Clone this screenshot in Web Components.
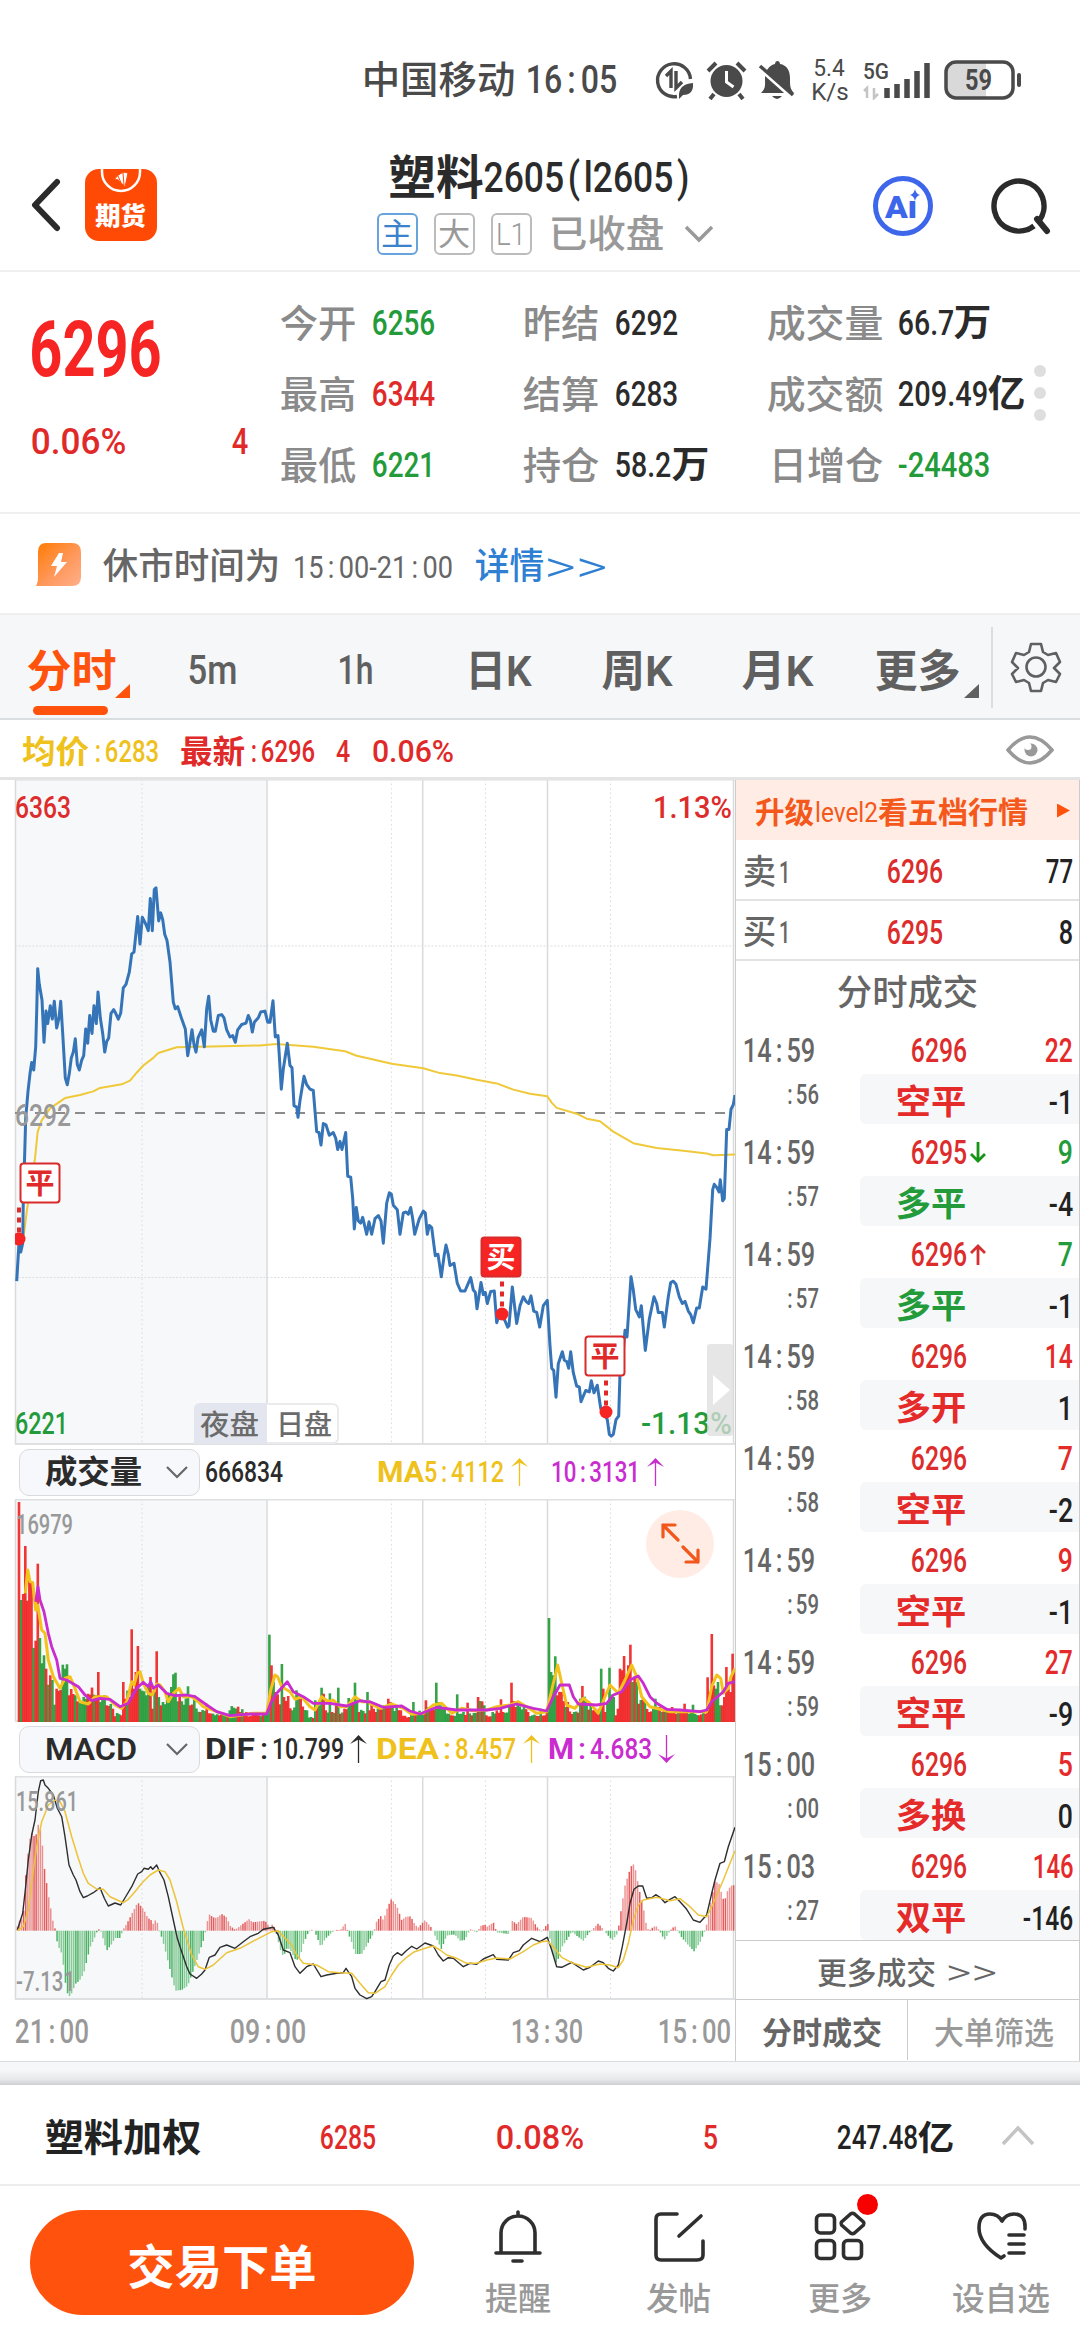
<!DOCTYPE html>
<html lang="zh-CN">
<head>
<meta charset="utf-8">
<title>塑料2605</title>
<style>
    html, body { margin: 0; padding: 0; background: #fff; }
    body {
        width: 1080px;
        height: 2340px;
        overflow: hidden;
        font-family: Roboto, "Noto Sans CJK SC", sans-serif;
        color: #2b2b2b;
        --red: #e02a2a;
        --green: #239b3a;
        --gray: #666;
        --soft: #999;
        --orange: #ff520d;
        --gold: #efc11c;
        --purple: #c92ccf;
        --pale: #f6f7f9;
    }
    .main { display: flex; height: 1281px; }
    .left { width: 735px; flex: none; }
</style>
</head>
<body>
<status-bar></status-bar>
<title-bar></title-bar>
<quote-panel></quote-panel>
<notice-row></notice-row>
<period-tabs></period-tabs>
<legend-row></legend-row>
<div class="main">
    <div class="left">
        <price-chart></price-chart>
        <indicator-bar name="成交量" name-width="95">
            <fit-text w="76" size="30" ml="0">666834</fit-text>
            <fit-text w="45" size="30" ml="96" weight="700" color="var(--gold)">MA</fit-text>
            <fit-text w="78" size="30" ml="2" color="var(--gold)">5:4112</fit-text>
            <trend-arrow ml="8" color="var(--gold)"></trend-arrow>
            <fit-text w="87" size="30" ml="24" color="var(--purple)">10:3131</fit-text>
            <trend-arrow ml="8" color="var(--purple)"></trend-arrow>
        </indicator-bar>
        <volume-chart></volume-chart>
        <indicator-bar name="MACD" name-width="90">
            <fit-text w="48" size="30" ml="0" weight="700">DIF</fit-text>
            <fit-text w="6" size="30" ml="7" tight>:</fit-text>
            <fit-text w="70" size="30" ml="6">10.799</fit-text>
            <trend-arrow ml="7"></trend-arrow>
            <fit-text w="61" size="30" ml="10" weight="700" color="var(--gold)">DEA</fit-text>
            <fit-text w="6" size="30" ml="6" color="var(--gold)" tight>:</fit-text>
            <fit-text w="59" size="30" ml="6" color="var(--gold)">8.457</fit-text>
            <trend-arrow ml="8" color="var(--gold)"></trend-arrow>
            <fit-text w="24" size="30" ml="9" weight="700" color="var(--purple)">M</fit-text>
            <fit-text w="6" size="30" ml="6" color="var(--purple)" tight>:</fit-text>
            <fit-text w="60" size="30" ml="6" color="var(--purple)">4.683</fit-text>
            <trend-arrow ml="7" color="var(--purple)" down></trend-arrow>
        </indicator-bar>
        <macd-chart></macd-chart>
        <time-axis></time-axis>
    </div>
    <trade-panel></trade-panel>
</div>
<index-bar></index-bar>
<action-bar></action-bar>

<script>
// One run of text squeezed or stretched to an exact width.
class FitText extends HTMLElement {
    connectedCallback() {
        if (this.shadowRoot) return;
        const size = Number(this.getAttribute('size'));
        const width = Number(this.getAttribute('w'));
        this.attachShadow({ mode: 'open' });
        this.shadowRoot.innerHTML = `
            <style>
                :host {
                    display: block;
                    flex: none;
                    width: ${width}px;
                    margin-left: ${this.getAttribute('ml') || 0}px;
                    line-height: ${size}px;
                    font-size: ${size}px;
                    font-weight: ${this.getAttribute('weight') || 500};
                    color: ${this.getAttribute('color') || 'inherit'};
                }
                span { display: inline-block; white-space: nowrap; transform-origin: 0 50%; }
                ::slotted(i) { font-style: normal; padding: 0 .16em; }
            </style>
            <span><slot></slot></span>
        `;
        if (this.textContent.includes(':') && !this.hasAttribute('tight')) {
            this.innerHTML = this.textContent.replace(/:/g, '<i>:</i>');
        }
        const span = this.shadowRoot.querySelector('span');
        const bearing = size * 0.035;
        const scale = (width + bearing * 2) / span.getBoundingClientRect().width;
        span.style.transform = `translateX(${-bearing}px) scaleX(${scale})`;
    }
}
customElements.define('fit-text', FitText);

class TrendArrow extends HTMLElement {
    connectedCallback() {
        this.attachShadow({ mode: 'open' });
        this.shadowRoot.innerHTML = `
            <style>
                :host { display: block; flex: none; width: 17px; height: 28px; margin-left: ${this.getAttribute('ml')}px; color: ${this.getAttribute('color') || '#2b2b2b'}; }
                svg { display: block; ${this.hasAttribute('down') ? 'transform: rotate(180deg);' : ''} }
            </style>
            <svg width="17" height="28"><path d="M8.5 28V2" stroke="currentColor" stroke-width="1.3"/><path d="M8.5 0L17 9L8.5 4.5L0 9Z" fill="currentColor"/></svg>
        `;
    }
}
customElements.define('trend-arrow', TrendArrow);

class StatusBar extends HTMLElement {
    connectedCallback() {
        this.attachShadow({ mode: 'open' });
        this.shadowRoot.innerHTML = `
            <style>
                :host { display: flex; align-items: center; height: 108px; padding: 26px 0 0 363px; color: #4a4a4a; }
                svg { display: block; flex: none; }
                .stack { margin-left: 17px; display: flex; flex-direction: column; gap: 1px; }
            </style>
            <fit-text w="151" size="38">中国移动</fit-text>
            <fit-text w="89" size="39" ml="13">16:05</fit-text>
            <svg style="margin-left:38px" width="141" height="40" viewBox="653 59 141 40">
                <g fill="none" stroke="currentColor" stroke-width="3.4">
                    <path d="M676 95.500A16.500 16.500 0 1 1 689.500 78"/>
                    <path d="M665 75l5-5v17M675 70v17l6-6"/>
                </g>
                <path d="M678 96q-1-13 14-14q1 12-10 12l-4 4z" fill="currentColor"/>
                <circle cx="725.500" cy="80" r="16" fill="currentColor"/>
                <path d="M707 70l8-8M744 70l-8-8M713 93l-4 5M738 93l4 5" stroke="currentColor" stroke-width="4"/>
                <path d="M725.500 70v11l7 5" fill="none" stroke="#fff" stroke-width="3"/>
                <path d="M760 92c5-5 4-8 4-15c0-8 5-13 10-14c0-4 5-4 5 0c7 1 10 7 10 14c0 8 0 11 4 15z" fill="currentColor"/>
                <path d="M771 95h10q-5 6-10 0z" fill="currentColor"/>
                <path d="M757 66l37 33" stroke="#fff" stroke-width="4"/>
                <path d="M759 65l33 29" stroke="currentColor" stroke-width="3.500"/>
            </svg>
            <div class="stack">
                <fit-text w="30" size="23" ml="2" weight="400">5.4</fit-text>
                <fit-text w="36" size="23" weight="400">K/s</fit-text>
            </div>
            <svg style="margin-left:14px" width="70" height="40" viewBox="861 59 70 40">
                <text x="862" y="78" font-size="22" font-weight="500" textLength="26" lengthAdjust="spacingAndGlyphs" fill="currentColor">5G</text>
                <path d="M863 90l3-3v10M873 87v10l4-4" fill="none" stroke="#c4c4c4" stroke-width="2.500"/>
                <path d="M886 97V87M896 97V83M906 97V78M916 97V70M926 97V62" stroke="currentColor" stroke-width="5.500"/>
            </svg>
            <svg style="margin-left:12px" width="78" height="40" viewBox="943 59 78 40">
                <path d="M985 62H956q-10 0-10 10V87q0 10 10 10H985z" fill="#d9d9d9"/>
                <rect x="945" y="61" width="67" height="36" rx="10" fill="none" stroke="currentColor" stroke-width="3.500"/>
                <path d="M1018 74v10" stroke="currentColor" stroke-width="4" stroke-linecap="round"/>
                <text x="964" y="89" font-size="29" font-weight="700" textLength="27" lengthAdjust="spacingAndGlyphs" fill="currentColor">59</text>
            </svg>
        `;
    }
}
customElements.define('status-bar', StatusBar);

class TitleBar extends HTMLElement {
    connectedCallback() {
        this.attachShadow({ mode: 'open' });
        this.shadowRoot.innerHTML = `
            <style>
                :host { display: flex; height: 138px; padding-top: 1px; box-sizing: border-box; border-bottom: 2px solid #efefef; }
                svg { display: block; flex: none; }
                .back { margin: 43px 0 0 29px; }
                .logo { margin: 34px 0 0 23px; width: 72px; height: 72px; border-radius: 14px; background: #ff4a06; color: #fff; }
                .logo fit-text { margin-top: -1px; }
                .mid { width: 340px; margin-left: 220px; padding-top: 19px; }
                .title { display: flex; align-items: center; height: 47px; margin-left: 13px; }
                .tags { display: flex; align-items: center; height: 42px; margin-top: 12px; color: var(--soft); }
                .tag { box-sizing: border-box; width: 41px; height: 42px; padding: 4px 0 0 3px; margin-right: 16px; border: 2px solid #bcbcbc; border-radius: 6px; }
                .tag.on { border-color: #67a3dc; color: #3a82cc; }
                .ai { margin: 39px 0 0 155px; }
                .find { margin: 39px 0 0 54px; }
            </style>
            <svg class="back" width="33" height="54"><path d="M28 4L6 27L28 50" fill="none" stroke="#2b2b2b" stroke-width="6" stroke-linecap="round" stroke-linejoin="round"/></svg>
            <div class="logo">
                <svg width="72" height="36"><path d="M17 0v3a19 19 0 0 0 38 0v-3" fill="none" stroke="#fff" stroke-width="2.500"/><path d="M29 11Q36 1 43 4L40 18Q38 14 36 15Q34 9 29 11M33 7l4 9M38 4l1 12" fill="#fff" stroke="#ff4a06" stroke-width="1"/></svg>
                <fit-text w="49" size="25" ml="11" weight="900">期货</fit-text>
            </div>
            <div class="mid">
                <div class="title">
                    <fit-text w="92" size="47" weight="600">塑料</fit-text>
                    <fit-text w="203" size="43" ml="3" weight="500">2605&#8202;(&#8202;l2605&#8202;)</fit-text>
                </div>
                <div class="tags">
                    <div class="tag on"><fit-text w="30" size="31" weight="400">主</fit-text></div>
                    <div class="tag"><fit-text w="30" size="31" weight="400">大</fit-text></div>
                    <div class="tag"><fit-text w="28" size="31" ml="1" weight="300">L1</fit-text></div>
                    <fit-text w="113" size="38" ml="2">已收盘</fit-text>
                    <svg style="margin-left:20px" width="32" height="20"><path d="M3 3L16 16L29 3" fill="none" stroke="#999" stroke-width="3.500"/></svg>
                </div>
            </div>
            <svg class="ai" width="62" height="64" viewBox="872 174 62 64">
                <circle cx="903" cy="206" r="27.500" fill="none" stroke="#3d66ea" stroke-width="5"/>
                <text x="885" y="218" font-size="31" font-weight="900" textLength="32" lengthAdjust="spacingAndGlyphs" fill="#3d66ea">Ai</text>
                <circle cx="914" cy="196" r="5" fill="#fff"/>
                <path d="M915 189q1 5 5 6q-4 1-5 6q-1-5-5-6q4-1 5-6z" fill="#3d66ea"/>
            </svg>
            <svg class="find" width="64" height="64" viewBox="988 174 64 64">
                <path d="M1034 226A25 25 0 1 1 1039 221" fill="none" stroke="#2b2b2b" stroke-width="5.500"/>
                <path d="M1037 219L1047 231" stroke="#2b2b2b" stroke-width="6" stroke-linecap="round"/>
            </svg>
        `;
    }
}
customElements.define('title-bar', TitleBar);

class QuotePanel extends HTMLElement {
    connectedCallback() {
        this.attachShadow({ mode: 'open' });
        this.shadowRoot.innerHTML = `
            <style>
                :host { display: flex; height: 242px; box-sizing: border-box; border-bottom: 2px solid #efefef; }
                .last { width: 248px; padding: 40px 0 0 32px; box-sizing: border-box; color: var(--red); flex: none; }
                .change { display: flex; align-items: center; margin-top: 33px; height: 40px; }
                .col { flex: none; padding-top: 16px; margin-left: 33px; width: 210px; }
                .row { display: flex; align-items: center; height: 71.2px; color: #2b2b2b; }
                .label { color: #8a8a8a; }
                .up { color: var(--red); }
                .down { color: var(--green); }
                .dots { display: flex; flex-direction: column; gap: 10px; margin: 93px 0 0 5px; }
                .dots i { width: 12px; height: 12px; border-radius: 50%; background: #dedede; }
            </style>
            <div class="last">
                <fit-text w="127" size="77" weight="700" color="#f72424">6296</fit-text>
                <div class="change"><fit-text w="93" size="36">0.06%</fit-text><fit-text w="14" size="36" ml="108">4</fit-text></div>
            </div>
            <div class="col">
                <div class="row"><fit-text class="label" w="74" size="38">今开</fit-text><fit-text class="down" w="61" size="35" ml="18">6256</fit-text></div>
                <div class="row"><fit-text class="label" w="74" size="38">最高</fit-text><fit-text class="up" w="61" size="35" ml="18">6344</fit-text></div>
                <div class="row"><fit-text class="label" w="74" size="38">最低</fit-text><fit-text class="down" w="61" size="35" ml="18">6221</fit-text></div>
            </div>
            <div class="col">
                <div class="row"><fit-text class="label" w="74" size="38">昨结</fit-text><fit-text w="61" size="35" ml="18">6292</fit-text></div>
                <div class="row"><fit-text class="label" w="74" size="38">结算</fit-text><fit-text w="61" size="35" ml="18">6283</fit-text></div>
                <div class="row"><fit-text class="label" w="74" size="38">持仓</fit-text><fit-text w="54" size="35" ml="18">58.2</fit-text><fit-text w="35" size="37" ml="3" weight="600">万</fit-text></div>
            </div>
            <div class="col" style="width:262px">
                <div class="row"><fit-text class="label" w="114" size="38" ml="1">成交量</fit-text><fit-text w="54" size="35" ml="17">66.7</fit-text><fit-text w="35" size="37" ml="2" weight="600">万</fit-text></div>
                <div class="row"><fit-text class="label" w="114" size="38" ml="1">成交额</fit-text><fit-text w="88" size="35" ml="17">209.49</fit-text><fit-text w="35" size="37" ml="2" weight="600">亿</fit-text></div>
                <div class="row"><fit-text class="label" w="112" size="38" ml="3">日增仓</fit-text><fit-text class="down" w="90" size="35" ml="17">-24483</fit-text></div>
            </div>
            <div class="dots"><i></i><i></i><i></i></div>
        `;
    }
}
customElements.define('quote-panel', QuotePanel);

class NoticeRow extends HTMLElement {
    connectedCallback() {
        this.attachShadow({ mode: 'open' });
        this.shadowRoot.innerHTML = `
            <style>
                :host { display: flex; align-items: center; height: 101px; padding: 7px 0 0 36px; box-sizing: border-box; border-bottom: 2px solid #efefef; color: #666; }
                svg { display: block; margin-top: -6px; }
            </style>
            <svg width="46" height="43">
                <defs><linearGradient id="g" x1="0" y1="0" x2="1" y2="1"><stop offset="0" stop-color="#ff7a00"/><stop offset=".6" stop-color="#ff9a61"/><stop offset="1" stop-color="#ffb08a"/></linearGradient></defs>
                <path d="M10 0H36Q45 0 45 9V34Q45 43 36 43H0Q2 40 2 34V9Q2 0 10 0Z" fill="url(#g)"/>
                <path d="M23 10L15 23H21L18 34L31 19H25L27 10Z" fill="#fff"/>
            </svg>
            <fit-text w="175" size="36" ml="22">休市时间为</fit-text>
            <fit-text w="158" size="31" ml="15" weight="400">15:00-21:00</fit-text>
            <fit-text w="67" size="36" ml="24" color="#2f7fd3">详情</fit-text>
            <fit-text w="60" size="44" ml="3" weight="300" color="#2f7fd3">&gt;&gt;</fit-text>
        `;
    }
}
customElements.define('notice-row', NoticeRow);

class PeriodTabs extends HTMLElement {
    connectedCallback() {
        this.attachShadow({ mode: 'open' });
        this.shadowRoot.innerHTML = `
            <style>
                :host { display: flex; height: 105px; box-sizing: border-box; border-bottom: 2px solid #d9dde0; background: var(--pale); color: #606060; padding-left: 28px; }
                fit-text { margin-top: 35px; }
                .on { color: var(--orange); width: 102px; flex: none; }
                .line { width: 75px; height: 9px; margin: 8px 0 0 5px; border-radius: 5px; background: var(--orange); }
                .tri { flex: none; width: 15px; height: 14px; background: currentColor; clip-path: polygon(100% 0, 100% 100%, 0 100%); }
                .head { display: flex; }
                .gear { flex: none; display: block; border-left: 2px solid #ddd; margin: 12px 0 0 12px; }
            </style>
            <div class="on">
                <div class="head"><fit-text w="87" size="44" weight="600">分时</fit-text><div class="tri" style="margin-top:69px"></div></div>
                <div class="line"></div>
            </div>
            <fit-text w="47" size="41" ml="59">5m</fit-text>
            <fit-text w="33" size="41" ml="103">1h</fit-text>
            <fit-text w="63" size="43" ml="95" weight="600">日K</fit-text>
            <fit-text w="68" size="43" ml="73" weight="600">周K</fit-text>
            <fit-text w="69" size="43" ml="72" weight="600">月K</fit-text>
            <fit-text w="83" size="44" ml="64" weight="600">更多</fit-text>
            <div class="tri" style="margin:69px 0 0 5px"></div>
            <svg class="gear" width="70" height="81" viewBox="991 627 70 81">
                <g fill="none" stroke="#606060" stroke-width="2.600" stroke-linejoin="round">
                    <path d="M1029 644h10l2 8l5 3l8-2l4 9l-6 6l6 6l-4 8l-8-2l-5 3l-2 8h-10l-2-8l-5-3l-8 2l-4-8l6-6l-6-6l4-9l8 2l5-3z"/>
                    <circle cx="1034" cy="667" r="9.500"/>
                </g>
            </svg>
        `;
    }
}
customElements.define('period-tabs', PeriodTabs);

class LegendRow extends HTMLElement {
    connectedCallback() {
        this.attachShadow({ mode: 'open' });
        this.shadowRoot.innerHTML = `
            <style>
                :host { display: flex; align-items: center; height: 60px; padding: 6px 0 0 23px; box-sizing: border-box; border-bottom: 3px solid #e4e4e4; color: var(--red); }
            </style>
            <fit-text w="65" size="32" weight="600" color="var(--gold)">均价</fit-text>
            <fit-text w="66" size="31" ml="4" color="var(--gold)">:6283</fit-text>
            <fit-text w="63" size="32" ml="23" weight="600">最新</fit-text>
            <fit-text w="66" size="31" ml="4">:6296</fit-text>
            <fit-text w="12" size="31" ml="23">4</fit-text>
            <fit-text w="80" size="31" ml="24">0.06%</fit-text>
            <svg style="margin:-3px 0 0 553px" width="48" height="30">
                <path d="M2 15Q13 2 24 2Q35 2 46 15Q35 28 24 28Q13 28 2 15Z" fill="none" stroke="#999" stroke-width="3.500"/>
                <circle cx="25" cy="15" r="6.500" fill="#999"/><circle cx="22" cy="11.500" r="3.500" fill="#fff"/>
            </svg>
        `;
    }
}
customElements.define('legend-row', LegendRow);

// Frame shared by the three stacked plots: night session shade and session lines.
function frame(h) {
    const solid = [15.5, 267, 422.7, 547.5, 733.5].map(x => `<path d="M${x} 0V${h}" stroke="#d9dadb" stroke-width="1.500"/>`).join('');
    const dots = [142, 391.5, 485.5, 610.5].map(x => `<path d="M${x} 0V${h}" stroke="#dcdee0" stroke-width="1.200" stroke-dasharray="1.500 3"/>`).join('');
    return `<rect x="15" width="252" height="${h}" fill="#f6f8fa"/>${dots}${solid}
        <path d="M15 .5H735M15 ${h - 1}H735" stroke="#dfe0e1" stroke-width="2"/>`;
}

function label(x, y, w, text, color, size = 32, weight = 500) {
    return `<text x="${x}" y="${y}" font-size="${size}" font-weight="${weight}" fill="${color}" textLength="${w}" lengthAdjust="spacingAndGlyphs">${text}</text>`;
}

// Data pairs are [x, y] in grid units; left and right halves of the session are kept apart.
function line(a, b, color, width, sx, sy, dy) {
    const pts = [];
    const add = (s, off) => s.trim().split(/\s+/).forEach(p => {
        const [x, y] = p.split(',').map(Number);
        pts.push(((x + off) / sx).toFixed(1) + ',' + (y / sy + dy).toFixed(1));
    });
    add(a, 0);
    add(b, 1110);
    return `<polyline points="${pts.join(' ')}" fill="none" stroke="${color}" stroke-width="${width}" stroke-linejoin="round"/>`;
}

function knots(a, b) {
    const out = [];
    a.trim().split(/\s+/).forEach(p => out.push(p.split(':').map(Number)));
    b.trim().split(/\s+/).forEach(p => { const [x, h] = p.split(':').map(Number); out.push([x + 1110, h]); });
    return out;
}

class PriceChart extends HTMLElement {
    connectedCallback() {
        const price = [
            '50,1145 57,1060 62,1080 68,1060 70,960 74,860 77,780 84,720 90,680 95,655 101,672 107,620 110,540 113,445 118,480 126,515 132,610 138,540 143,568 151,528 157,558 163,518 170,578 177,555 182,518 188,590 196,690 202,705 208,680 214,645 220,632 226,602 232,660 238,672 245,650 251,640 257,580 263,612 269,550 276,590 282,528 289,568 294,497 301,555 308,590 314,632 320,608 326,600 333,545 341,537 347,545 355,558 362,545 370,488 378,480 388,453 395,412 402,408 413,328 420,390 427,330 437,345 445,360 451,288 457,360 463,268 468,264 476,338 482,320 488,335 494,368 501,382 510,430 520,520 526,535 533,530 544,555 556,580 563,640 569,615 576,582 582,615 588,632 594,600 605,582 613,620 620,535 626,507 632,560 640,585 646,585 655,550 665,548 672,555 680,582 690,598 698,595 706,610 713,582 725,570 738,567 745,550 751,560 757,587 763,565 775,555 782,542 795,540 803,565 810,565 819,517 826,598 834,595 838,640 844,715 850,670 862,612 870,662 876,667 882,752 890,755 894,778 900,740 912,686 920,705 930,715 940,718 950,810 957,812 963,840 970,792 978,795 988,818 1000,812 1007,825 1013,850 1020,832 1026,850 1037,812 1043,910 1052,912 1058,960 1063,1028 1069,980 1075,1010 1082,1015 1088,1002 1100,1040 1107,1012',
            '5,1040 15,1005 25,998 33,1010 40,1060 50,970 58,947 64,950 70,975 82,985 90,1040 100,992 108,990 115,995 122,980 128,1005 134,1040 148,1005 160,988 166,992 172,1040 178,1020 185,1025 196,1088 204,1085 214,1135 222,1090 228,1064 235,1085 240,1110 252,1105 262,1150 272,1167 285,1167 302,1137 310,1165 316,1170 321,1207 333,1148 340,1175 346,1170 352,1195 362,1168 373,1167 380,1238 390,1215 398,1222 413,1248 417,1245 427,1158 440,1240 450,1200 460,1180 468,1190 476,1195 483,1178 491,1212 500,1215 509,1248 520,1200 532,1188 540,1290 545,1340 551,1345 558,1405 565,1330 577,1303 583,1322 590,1325 596,1340 602,1303 610,1350 620,1380 628,1382 633,1415 647,1390 658,1393 664,1368 672,1395 682,1378 692,1430 700,1440 712,1455 718,1488 724,1492 730,1488 738,1455 746,1447 750,1350 760,1300 765,1255 771,1270 783,1135 790,1165 797,1208 808,1225 814,1200 826,1300 838,1230 852,1180 860,1195 865,1215 877,1215 883,1248 895,1180 902,1148 910,1145 918,1152 928,1180 937,1195 945,1190 955,1212 962,1220 970,1238 980,1205 988,1205 998,1158 1008,1163 1020,1050 1028,940 1033,928 1040,935 1047,945 1051,918 1058,965 1063,960 1070,805 1077,805 1083,760 1090,750 1095,728'
        ];
        const avg = [
            '70,1050 82,980 95,920 105,870 113,810 125,785 150,758 195,735 240,728 280,720 300,712 365,704 390,696 410,678 430,662 460,645 475,634 530,621 600,620 780,617 830,614 940,620 1035,630 1070,640',
            '0,647 65,658 160,668 210,679 260,684 320,694 380,702 430,716 480,725 532,731 545,745 560,757 620,770 650,781 690,787 730,810 790,836 860,847 940,853 1010,859 1030,863 1095,861'
        ];
        const mark = (x, y, px, py, text, fill, ink) => `
            <rect x="${x}" y="${y}" width="39" height="39" rx="3" fill="${fill}" stroke="#d92b2b" stroke-width="2"/>
            <text x="${x + 19.5}" y="${y + 30}" text-anchor="middle" font-size="29" font-weight="600" fill="${ink}">${text}</text>
            <path d="M${px} ${y + 44}V${py}" stroke="#e02a2a" stroke-width="4" stroke-dasharray="5 5"/>
            <circle cx="${px}" cy="${py}" r="6.500" fill="#f72424"/>`;
        this.attachShadow({ mode: 'open' });
        this.shadowRoot.innerHTML = `
            <style>:host { display: block; height: 665px; } svg { display: block; }</style>
            <svg width="735" height="665" viewBox="0 1 735 665">
                ${frame(666)}
                <path d="M15 167H735M15 498.500H735" stroke="#dcdee0" stroke-dasharray="2 1.500"/>
                <path d="M194 665V630q0-6 6-6H267V665Z" fill="#e3e6ee"/>
                <path d="M267 625H332q6 0 6 6V659q0 5-6 5H267" fill="#fff" stroke="#ebebee" stroke-width="2"/>
                ${label(200, 656, 59, '夜盘', '#6b6b6b', 28)}${label(276, 656, 56, '日盘', '#6b6b6b', 28)}
                <path d="M15 334H733" stroke="#8b8b8b" stroke-width="2" stroke-dasharray="10 10"/>
                ${line(...avg, '#efc93a', 2, 3, 2.24, -9)}
                ${line(...price, '#3674b8', 3, 3, 2.24, -9)}
                ${label(15, 39, 56, '6363', '#dc2c2c')}${label(653, 39, 79, '1.13%', '#dc2c2c')}
                ${label(15, 347, 56, '6292', '#999')}
                ${label(15, 655, 53, '6221', '#239b3a')}${label(641, 655, 91, '-1.13%', '#239b3a')}
                <clipPath id="plot"><rect x="15" width="720" height="666"/></clipPath>
                <g clip-path="url(#plot)">${mark(20.5, 384.5, 19, 460, '平', '#fff', '#e02a2a')}</g>
                ${mark(481.5, 458.5, 502, 535, '买', '#f72424', '#fff')}
                ${mark(585.5, 557.5, 606, 633, '平', '#fff', '#e02a2a')}
                <rect x="707" y="565" width="26" height="92" rx="3" fill="#dedede" opacity=".75"/>
                <path d="M713 596L730 611L713 626Z" fill="#fff"/>
            </svg>
        `;
    }
}
customElements.define('price-chart', PriceChart);

class IndicatorBar extends HTMLElement {
    connectedCallback() {
        this.attachShadow({ mode: 'open' });
        this.shadowRoot.innerHTML = `
            <style>
                :host { display: flex; align-items: center; height: 54px; }
                .pick { display: flex; align-items: center; justify-content: space-between; box-sizing: border-box; width: 181px; height: 47px; margin: 0 6px 0 19px; padding: 0 11px 0 26px; background: #f6f8fb; border: 1px solid #d8dade; border-radius: 10px; flex: none; }
                .pick svg { display: block; }
            </style>
            <div class="pick">
                <fit-text w="${this.getAttribute('name-width')}" size="32" weight="600">${this.getAttribute('name')}</fit-text>
                <svg width="22" height="13"><path d="M1 1L11 11L21 1" fill="none" stroke="#666" stroke-width="2.200"/></svg>
            </div>
            <slot></slot>
        `;
    }
}
customElements.define('indicator-bar', IndicatorBar);

class VolumeChart extends HTMLElement {
    // Negative height marks a falling minute.
    bars() {
        const k = knots(
            '57:660 63:-366 70:384 76:528 82:364 88:430 95:420 101:-222 107:244 113:475 120:-252 126:-176 132:-200 138:160 150:140 157:-126 163:-52 170:100 182:96 188:-172 195:-160 201:-173 207:80 220:84 226:-80 232:62 245:-60 257:-70 270:82 288:80 294:150 301:-60 313:-80 322:50 340:40 362:20 370:120 376:70 388:75 395:278 401:100 407:150 413:228 420:-100 430:-92 438:-80 451:135 457:40 463:-90 470:212 476:-75 482:50 490:-60 500:-80 513:-105 526:-148 532:-62 545:-62 563:-107 570:50 585:-80 600:30 620:55 640:-25 660:20 690:-35 713:46 740:30 780:20 800:-25 806:-262 813:170 819:-120 825:90 830:-66 844:-174 850:75 863:78 875:-35 890:-95 905:70 920:-35 932:-15 945:-65 957:-50 963:-103 970:85 976:35 987:-86 995:30 1007:50 1013:-103 1020:25 1032:40 1045:-72 1063:-118 1070:-65 1080:30 1100:-90 1105:40',
            '10:40 20:30 40:-50 58:70 70:-45 95:35 115:15 133:-60 145:-25 165:65 180:35 196:-118 210:-50 225:-40 245:20 264:-83 275:-25 290:58 305:20 327:75 340:-50 352:20 365:-30 390:68 400:30 415:-45 427:118 440:45 460:-45 475:30 490:-20 510:-40 525:20 532:40 539:-312 546:-150 552:-140 558:-197 565:80 577:90 585:-45 595:60 610:-30 630:-70 640:108 652:-60 670:35 690:40 696:-160 702:100 709:30 715:-55 720:-163 728:-75 740:20 746:40 752:160 758:155 764:198 770:130 777:170 783:232 790:-120 797:-120 808:55 826:-60 840:30 858:-70 870:45 890:-30 905:45 920:25 945:55 955:-25 970:-52 985:20 1005:25 1013:134 1020:90 1026:264 1032:110 1040:-100 1045:-120 1051:-50 1063:75 1070:165 1076:100 1083:90 1089:205 1095:160'
        );
        let out = '', seed = 7, up = true;
        const rnd = () => (seed = (seed * 16807) % 2147483647) / 2147483647;
        for (let i = 0; i < 344; i++) {
            const x = 57 + i * 6.26;
            let h = 30;
            const hit = k.find(p => Math.abs(p[0] - x) <= 3.13);
            if (hit) {
                h = Math.abs(hit[1]);
                up = hit[1] > 0;
            } else {
                const j = k.findIndex(p => p[0] > x);
                if (j > 0) h = Math.min(Math.abs(k[j - 1][1]), Math.abs(k[j][1])) * (0.8 + rnd() * 0.6);
                if (rnd() > 0.6) up = !up;
            }
            out += `<rect x="${(x / 3 - 1.3).toFixed(1)}" y="${(223 - h / 3).toFixed(1)}" width="2.600" height="${(h / 3).toFixed(1)}" fill="${up ? '#f02323' : '#259b38'}" opacity=".92"/>`;
        }
        return out;
    }
    connectedCallback() {
        const ma5 = [
            '76,490 83,420 90,455 98,458 107,540 113,525 125,600 135,610 145,690 160,740 180,775 195,745 210,740 225,775 240,815 265,822 285,800 320,800 345,825 365,835 380,815 395,755 402,765 412,730 420,725 430,760 445,790 457,795 470,762 480,765 495,785 505,815 520,790 537,775 550,800 575,800 595,815 610,830 650,845 690,860 760,850 800,850 812,780 825,735 833,740 845,770 870,785 885,808 905,800 930,830 945,840 965,800 985,815 1000,810 1020,830 1040,830 1065,800 1085,815 1105,815',
            '0,820 30,835 65,822 100,835 125,853 160,850 190,825 215,820 245,850 275,835 310,842 350,840 380,830 420,825 445,815 470,830 500,850 530,845 545,780 563,705 575,760 590,825 615,835 640,805 660,820 685,850 705,800 720,765 745,790 765,750 785,705 800,740 815,800 840,830 900,845 960,845 1010,845 1025,770 1040,735 1052,745 1060,790 1075,775 1083,740 1095,715'
        ];
        const ma10 = [
            '107,515 114,470 120,510 132,545 145,610 155,650 170,690 180,745 200,750 235,770 255,795 275,812 300,805 330,808 360,830 385,820 410,775 430,757 445,770 452,755 460,775 475,765 500,790 525,797 560,795 585,800 620,825 650,845 690,857 750,852 800,852 812,820 830,790 862,755 880,785 910,800 940,820 990,820 1040,828 1080,812 1105,816',
            '0,815 40,832 95,828 120,843 150,852 200,832 260,840 300,840 350,840 390,835 440,822 490,835 530,843 550,800 570,765 598,765 610,800 625,822 680,825 710,820 730,795 755,785 780,750 805,738 820,760 840,800 860,820 890,838 930,840 990,845 1010,840 1025,815 1060,785 1075,760 1095,755'
        ];
        this.attachShadow({ mode: 'open' });
        this.shadowRoot.innerHTML = `
            <style>:host { display: block; height: 223px; } svg { display: block; }</style>
            <svg width="735" height="223">
                ${frame(223)}
                ${this.bars()}
                ${line(...ma5, '#f3c21d', 3, 3, 3, -69)}
                ${line(...ma10, '#c92ccf', 2.8, 3, 3, -69)}
                ${label(16, 35, 57, '16979', '#999', 27)}
                <circle cx="680" cy="45" r="34" fill="#ffece5"/>
                <path d="M678 41L663 26M663 38V26H675M683 48L698 63M686 63H698V51" fill="none" stroke="#f2581b" stroke-width="3.200" stroke-linecap="round" stroke-linejoin="round"/>
            </svg>
        `;
    }
}
customElements.define('volume-chart', VolumeChart);

class MacdChart extends HTMLElement {
    bars() {
        const k = knots(
            '50:5 57:30 63:30 70:45 76:155 82:220 88:270 95:295 101:285 107:280 113:320 120:310 126:270 132:195 138:155 145:105 151:75 157:35 163:15 167:-3 170:-28 176:-50 182:-58 188:-85 195:-150 201:-185 207:-198 214:-190 226:-160 238:-150 251:-128 263:-80 270:-50 285:-18 294:5 301:3 308:-20 320:-60 335:-40 345:-22 360:-22 370:5 380:20 395:50 413:85 430:65 445:35 451:40 457:15 463:30 470:32 476:3 482:-10 495:-55 513:-130 526:-180 545:-178 563:-165 585:-105 600:-60 613:-20 619:12 626:50 640:40 650:38 665:50 680:40 690:15 705:3 715:10 730:22 748:35 757:25 780:28 795:30 810:10 819:22 828:-5 840:-55 850:-78 862:-50 872:-60 888:-90 900:-80 910:-40 925:-5 938:5 945:-5 963:-50 975:-25 995:-6 1007:3 1020:1 1037:22 1045:-10 1055:-35 1065:-70 1085:-70 1100:-45',
            '2:-22 10:-10 18:25 33:45 40:30 52:70 64:95 80:75 95:32 108:42 122:43 135:18 145:10 165:32 185:8 195:-15 214:-55 230:-15 245:-12 255:-12 270:-30 285:-28 300:5 320:-5 333:15 345:18 352:12 370:25 380:-5 415:-10 421:0 427:30 440:20 460:42 485:38 500:12 515:-3 533:22 539:-20 545:-60 560:-100 575:-50 595:-20 605:-3 620:-15 640:-30 660:-3 685:22 700:3 712:-12 727:-28 743:-8 752:55 765:135 777:175 788:205 797:180 808:120 820:70 830:10 838:0 850:12 858:14 870:-2 883:-28 900:0 914:15 925:-3 935:-20 950:-38 972:-62 990:-35 1003:-3 1013:30 1023:90 1035:150 1047:140 1055:110 1063:85 1070:115 1082:135 1095:137'
        );
        let out = '';
        for (let i = 0; i < 344; i++) {
            const x = 52 + i * 6.265;
            const j = k.findIndex(p => p[0] >= x);
            if (j < 1) continue;
            const [x0, h0] = k[j - 1], [x1, h1] = k[j];
            const h = (h0 + (h1 - h0) * (x - x0) / (x1 - x0)) / 3;
            const strong = i % 5 > 2 ? 1 : 0.65;
            out += `<rect x="${(x / 3 - 0.7).toFixed(1)}" y="${(154.7 - Math.max(h, 0)).toFixed(1)}" width="1.500" height="${Math.abs(h).toFixed(1)}" fill="${h > 0 ? '#e45b5b' : '#4cb264'}" opacity="${strong}"/>`;
        }
        return out;
    }
    connectedCallback() {
        const dif = [
            '52,630 60,605 68,580 76,510 85,420 95,345 105,300 115,215 122,182 130,180 135,195 145,205 160,225 172,265 185,290 195,350 207,435 220,465 228,480 240,515 250,533 262,528 280,518 300,503 313,535 325,558 345,549 362,555 380,525 395,500 413,462 425,455 432,445 445,448 452,440 458,448 470,435 480,458 492,480 505,530 520,600 532,655 545,695 560,740 570,762 590,775 605,762 615,750 628,712 645,705 660,682 680,675 705,685 730,665 750,650 775,640 790,628 820,622 835,645 850,690 870,698 885,740 900,760 920,740 940,732 963,770 980,765 1010,760 1030,758 1038,745 1055,770 1065,805 1080,825 1100,836',
            '5,830 15,815 33,785 45,780 58,735 70,708 82,698 95,706 108,693 125,679 140,687 165,669 190,678 205,705 220,723 235,713 250,715 280,740 300,730 320,733 340,717 370,704 380,718 415,720 430,698 448,692 460,675 485,655 510,665 532,652 545,690 560,740 575,742 605,727 640,750 660,742 685,723 700,728 715,745 730,753 745,735 757,680 770,610 780,550 792,508 805,498 818,498 830,535 845,533 857,524 870,532 885,548 900,538 915,530 930,545 950,568 970,600 990,607 1010,585 1025,520 1035,480 1050,430 1063,425 1075,380 1095,322'
        ];
        const dea = [
            '52,632 70,620 85,570 100,450 112,370 125,305 145,255 165,240 180,245 195,275 215,350 235,415 250,460 265,490 290,507 310,508 330,530 370,548 385,538 405,515 425,490 450,465 475,450 495,455 510,480 530,545 550,625 575,705 595,740 615,748 640,735 680,698 720,685 770,658 815,635 835,632 860,660 875,675 890,705 910,730 950,735 985,755 1020,758 1055,760 1080,790 1105,818',
            '15,820 45,800 65,765 85,735 110,712 130,697 170,683 190,678 210,690 230,705 260,715 290,730 320,730 350,720 380,714 420,717 460,695 490,675 515,665 532,663 550,680 575,712 610,730 650,742 690,732 720,735 745,743 760,720 775,670 790,600 805,555 820,540 860,532 900,542 930,536 960,560 985,585 1010,590 1030,550 1060,480 1095,392'
        ];
        this.attachShadow({ mode: 'open' });
        this.shadowRoot.innerHTML = `
            <style>:host { display: block; height: 224px; } svg { display: block; }</style>
            <svg width="735" height="224">
                ${frame(224)}
                ${this.bars()}
                ${line(...dif, '#2e2e2e', 1.4, 3, 3, -56)}
                ${line(...dea, '#ecc339', 1.5, 3, 3, -56)}
                ${label(16, 35, 62, '15.861', '#999', 27)}${label(16, 215, 59, '-7.131', '#999', 27)}
            </svg>
        `;
    }
}
customElements.define('macd-chart', MacdChart);

class TimeAxis extends HTMLElement {
    connectedCallback() {
        this.attachShadow({ mode: 'open' });
        this.shadowRoot.innerHTML = `
            <style>:host { display: flex; align-items: center; height: 61px; padding: 2px 0 0 16px; box-sizing: border-box; color: var(--soft); }</style>
            <fit-text w="72" size="33">21:00</fit-text>
            <fit-text w="74" size="33" ml="143">09:00</fit-text>
            <fit-text w="70" size="33" ml="207">13:30</fit-text>
            <fit-text w="71" size="33" ml="77">15:00</fit-text>
        `;
    }
}
customElements.define('time-axis', TimeAxis);

class TickRow extends HTMLElement {
    connectedCallback() {
        const at = n => this.getAttribute(n);
        const width = s => s.startsWith('-') ? (s.length - 1) * 13 + 9 : s.length * 12.8;
        const tone = at('tone') === 'down' ? 'var(--green)' : '#e52a2a';
        const arrow = at('arrow');
        this.attachShadow({ mode: 'open' });
        this.shadowRoot.innerHTML = `
            <style>
                :host { display: block; height: 102px; color: #666; }
                .a { display: flex; align-items: center; height: 52px; padding: 4px 7px 0 8px; }
                .a, .b, .box { box-sizing: border-box; }
                .b { display: flex; height: 50px; }
                .b > fit-text { margin-top: 7px; }
                .box { display: flex; align-items: center; width: 219px; padding: 6px 7px 0 37px; margin-left: 42px; background: var(--pale); border-radius: 6px 0 0 6px; }
                .end { margin-left: auto; }
                svg { display: block; margin-left: 4px; }
            </style>
            <div class="a">
                <fit-text w="70" size="33">${at('time')}</fit-text>
                <fit-text w="54" size="33" ml="98" color="#dc2c2c">${at('price')}</fit-text>
                ${arrow ? `<svg width="16" height="21" style="transform:rotate(${arrow === 'up' ? 0 : 180}deg)"><path d="M8 21V2M1 9L8 2L15 9" fill="none" stroke="${arrow === 'up' ? '#d53030' : '#159415'}" stroke-width="2.800"/></svg>` : ''}
                <div class="end"><fit-text w="${width(at('vol'))}" size="33" color="${tone}">${at('vol')}</fit-text></div>
            </div>
            <div class="b">
                <fit-text w="33" size="28" ml="49">${at('sec')}</fit-text>
                <div class="box">
                    <fit-text w="68" size="34" weight="600" color="${tone}">${at('kind')}</fit-text>
                    <div class="end"><fit-text w="${width(at('open'))}" size="33" color="#222">${at('open')}</fit-text></div>
                </div>
            </div>
        `;
    }
}
customElements.define('tick-row', TickRow);

class TradePanel extends HTMLElement {
    connectedCallback() {
        this.attachShadow({ mode: 'open' });
        this.shadowRoot.innerHTML = `
            <style>
                :host { display: block; box-sizing: border-box; width: 345px; border-left: 1px solid #ccc; border-right: 1px solid #ccc; color: #666; }
                .up { display: flex; align-items: center; height: 60px; padding: 5px 0 0 20px; box-sizing: border-box; background: #ffece5; color: #f4581a; }
                .tri { width: 13px; height: 14px; margin: -4px 0 0 30px; background: var(--orange); clip-path: polygon(0 0, 100% 50%, 0 100%); }
                .book { display: flex; align-items: center; height: 60.5px; padding: 5px 7px 0 8px; box-sizing: border-box; border-bottom: 2px solid #e3e3e3; }
                .end { margin-left: auto; color: #222; }
                .head { display: flex; justify-content: center; align-items: center; height: 61px; padding: 4px 0 0; box-sizing: border-box; }
                .more { display: flex; align-items: center; height: 60px; padding: 6px 0 0 82px; box-sizing: border-box; border-top: 1px solid #ccc; border-bottom: 1px solid #ccc; }
                .tabs { display: flex; height: 60px; }
                .tabs div { display: flex; align-items: center; justify-content: center; flex: 1; padding-top: 6px; box-sizing: border-box; }
                .tabs div + div { border-left: 1px solid #ccc; color: var(--soft); }
            </style>
            <div class="up">
                <fit-text w="57" size="30" weight="600">升级</fit-text>
                <fit-text w="61" size="28" ml="3" weight="400">level2</fit-text>
                <fit-text w="148" size="30" ml="2" weight="600">看五档行情</fit-text>
                <div class="tri"></div>
            </div>
            <div class="book"><fit-text w="31" size="34">卖</fit-text><fit-text w="9" size="32" ml="5">1</fit-text><fit-text w="54" size="33" ml="99" color="#dc2c2c">6296</fit-text><div class="end"><fit-text w="25" size="33">77</fit-text></div></div>
            <div class="book"><fit-text w="31" size="34">买</fit-text><fit-text w="9" size="32" ml="5">1</fit-text><fit-text w="54" size="33" ml="99" color="#dc2c2c">6295</fit-text><div class="end"><fit-text w="12" size="33">8</fit-text></div></div>
            <div class="head"><fit-text w="139" size="35">分时成交</fit-text></div>
            <tick-row time="14:59" sec=":56" price="6296" vol="22" kind="空平" open="-1"></tick-row>
            <tick-row time="14:59" sec=":57" price="6295" vol="9" kind="多平" open="-4" tone="down" arrow="down"></tick-row>
            <tick-row time="14:59" sec=":57" price="6296" vol="7" kind="多平" open="-1" tone="down" arrow="up"></tick-row>
            <tick-row time="14:59" sec=":58" price="6296" vol="14" kind="多开" open="1"></tick-row>
            <tick-row time="14:59" sec=":58" price="6296" vol="7" kind="空平" open="-2"></tick-row>
            <tick-row time="14:59" sec=":59" price="6296" vol="9" kind="空平" open="-1"></tick-row>
            <tick-row time="14:59" sec=":59" price="6296" vol="27" kind="空平" open="-9"></tick-row>
            <tick-row time="15:00" sec=":00" price="6296" vol="5" kind="多换" open="0"></tick-row>
            <tick-row time="15:03" sec=":27" price="6296" vol="146" kind="双平" open="-146"></tick-row>
            <div class="more"><fit-text w="117" size="31">更多成交</fit-text><fit-text w="49" size="36" ml="12" weight="300">&gt;&gt;</fit-text></div>
            <div class="tabs">
                <div><fit-text w="118" size="31" weight="700">分时成交</fit-text></div>
                <div><fit-text w="118" size="31">大单筛选</fit-text></div>
            </div>
        `;
    }
}
customElements.define('trade-panel', TradePanel);

class IndexBar extends HTMLElement {
    connectedCallback() {
        this.attachShadow({ mode: 'open' });
        this.shadowRoot.innerHTML = `
            <style>
                :host { display: block; color: var(--red); }
                .gap { height: 24px; box-sizing: border-box; border-top: 1px solid #d9dde0; background: linear-gradient(#f6f7f9 35%, #e6e8ea 75%, #cdcfd2); }
                .row { display: flex; align-items: center; height: 101px; padding: 6px 0 0 46px; box-sizing: border-box; border-bottom: 2px solid #ededed; }
            </style>
            <div class="gap"></div>
            <div class="row">
                <fit-text w="154" size="38" weight="600" color="#222">塑料加权</fit-text>
                <fit-text w="54" size="33" ml="121">6285</fit-text>
                <fit-text w="86" size="33" ml="122">0.08%</fit-text>
                <fit-text w="13" size="33" ml="121">5</fit-text>
                <fit-text w="79" size="33" ml="121" color="#222">247.48</fit-text>
                <fit-text w="34" size="34" ml="2" weight="600" color="#222">亿</fit-text>
                <svg style="margin:-5px 0 0 48px" width="34" height="21"><path d="M2 19L17 3L32 19" fill="none" stroke="#c4c4c4" stroke-width="3.500"/></svg>
            </div>
        `;
    }
}
customElements.define('index-bar', IndexBar);

class ActionBar extends HTMLElement {
    connectedCallback() {
        this.attachShadow({ mode: 'open' });
        this.shadowRoot.innerHTML = `
            <style>
                :host { display: flex; height: 154px; padding-left: 30px; box-sizing: border-box; color: var(--soft); }
                .trade { display: flex; align-items: center; justify-content: center; box-sizing: border-box; width: 384px; height: 105px; margin-top: 24px; padding-top: 9px; border-radius: 53px; background: var(--orange); color: #fff; flex: none; }
                .item { display: flex; flex-direction: column; align-items: center; position: relative; width: 161px; padding-top: 23px; flex: none; }
                svg { display: block; width: 56px; height: 56px; margin-bottom: 18px; }
                g { fill: none; stroke: #2f2f2f; stroke-width: 3.600; stroke-linecap: round; stroke-linejoin: round; }
                .badge { position: absolute; left: 98px; top: 8px; width: 21px; height: 21px; border-radius: 50%; background: #f60000; }
            </style>
            <div class="trade"><fit-text w="186" size="47" weight="600">交易下单</fit-text></div>
            <div class="item" style="margin-left:23px">
                <svg viewBox="490 2209 56 56"><g><path d="M496 2253H540M501 2252V2233A17 17 0 0 1 535 2233V2252M518 2215V2212M513 2261H522"/></g></svg>
                <fit-text w="64" size="32">提醒</fit-text>
            </div>
            <div class="item">
                <svg viewBox="651 2209 56 56"><g><path d="M677 2214H661Q656 2214 656 2219V2255Q656 2260 661 2260H697Q703 2260 703 2255V2241M679 2236L701 2216"/></g></svg>
                <fit-text w="63" size="32">发帖</fit-text>
            </div>
            <div class="item">
                <svg viewBox="811 2209 56 56"><g><rect x="815.500" y="2215" width="18" height="18" rx="4"/><rect x="815.500" y="2240.500" width="18" height="18" rx="4"/><rect x="842.500" y="2240.500" width="18" height="18" rx="4"/><path d="M849.500 2214L840.500 2222Q839.500 2223.500 840.500 2225L849.500 2233Q851.500 2234.500 853.500 2233L862.500 2225Q863.500 2223.500 862.500 2222L853.500 2214Q851.500 2212.500 849.500 2214Z"/></g></svg>
                <fit-text w="62" size="32">更多</fit-text>
                <div class="badge"></div>
            </div>
            <div class="item">
                <svg viewBox="970 2209 56 56"><g><path d="M1022 2229Q1023 2214 1011 2214Q1003 2214 999 2221Q995 2214 987 2214Q976 2214 976 2228Q976 2244 998 2258L1001 2256M1006 2235H1021M1006 2244H1021M1006 2253H1021"/></g></svg>
                <fit-text w="96" size="32">设自选</fit-text>
            </div>
        `;
    }
}
customElements.define('action-bar', ActionBar);
</script>
</body>
</html>
